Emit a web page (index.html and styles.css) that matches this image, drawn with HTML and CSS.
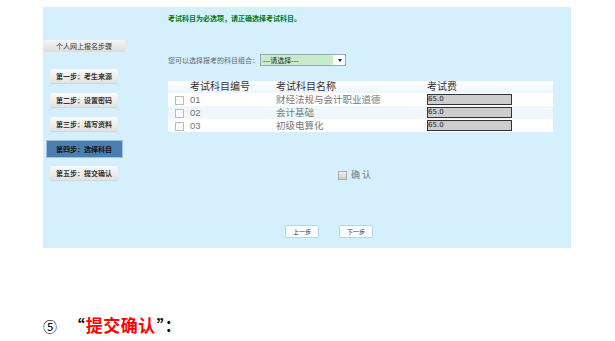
FILE: index.html
```html
<!DOCTYPE html>
<html lang="zh-CN">
<head>
    <meta charset="UTF-8">
    <meta name="viewport" content="width=device-width, initial-scale=1.0">
    <title>选择科目</title>
    <link rel="stylesheet" href="styles.css">
</head>
<body>
    <div class="panel">
        <!-- 左侧步骤 -->
        <div class="sidebar">
            <div class="side-title">个人网上报名步骤</div>
            <div class="step">第一步：考生来源</div>
            <div class="step">第二步：设置密码</div>
            <div class="step">第三步：填写资料</div>
            <div class="step active">第四步：选择科目</div>
            <div class="step">第五步：提交确认</div>
        </div>

        <!-- 右侧内容 -->
        <div class="main">
            <div class="notice">考试科目为必选项，请正确选择考试科目。</div>
            <div class="combo">
                <span>您可以选择报考的科目组合：</span>
                <div class="select"><span>---请选择---</span><span class="arrow"></span></div>
            </div>
            <table class="subjects">
                <thead>
                    <tr>
                        <th class="c-check"></th>
                        <th class="c-code">考试科目编号</th>
                        <th class="c-name">考试科目名称</th>
                        <th class="c-fee">考试费</th>
                    </tr>
                </thead>
                <tbody>
                    <tr>
                        <td class="c-check"><span class="box"></span></td>
                        <td class="c-code">01</td>
                        <td class="c-name">财经法规与会计职业道德</td>
                        <td class="c-fee"><div class="fee">65.0</div></td>
                    </tr>
                    <tr class="alt">
                        <td class="c-check"><span class="box"></span></td>
                        <td class="c-code">02</td>
                        <td class="c-name">会计基础</td>
                        <td class="c-fee"><div class="fee">65.0</div></td>
                    </tr>
                    <tr>
                        <td class="c-check"><span class="box"></span></td>
                        <td class="c-code">03</td>
                        <td class="c-name">初级电算化</td>
                        <td class="c-fee"><div class="fee">65.0</div></td>
                    </tr>
                </tbody>
            </table>
            <div class="confirm"><span class="box"></span><span>确 认</span></div>
            <div class="buttons">
                <div class="btn">上一步</div>
                <div class="btn">下一步</div>
            </div>
        </div>
    </div>

    <p class="caption"><span class="num">⑤</span> “<span class="red">提交确认</span>”：</p>
</body>
</html>
```

FILE: styles.css
```css
body {
    margin: 0;
    background: #fff;
    font-family: "Noto Sans CJK SC", "DejaVu Sans", sans-serif;
}
.panel {
    margin: 7px 0 0 43px;
    width: 528px;
    height: 241px;
    background: #d6effc;
    display: flex;
}
.sidebar {
    width: 82px;
    padding-top: 33px;
    display: flex;
    flex-direction: column;
    align-items: center;
}
.side-title {
    width: 82px;
    height: 12px;
    line-height: 12px;
    text-align: center;
    font-size: 7px;
    color: #333;
    background: linear-gradient(#f6f6f6, #dcdcdc);
    margin-bottom: 17px;
}
.step {
    width: 68px;
    height: 14px;
    line-height: 14px;
    margin-bottom: 10px;
    text-align: center;
    font-size: 7px;
    font-weight: bold;
    color: #333;
    background: linear-gradient(#fafafa, #e2e2e2);
    box-shadow: 0 1px 1px #c5d9e4;
    border-radius: 2px;
}
.step.active {
    width: 75px;
    height: 16px;
    line-height: 16px;
    margin-bottom: 9px;
    color: #111;
    background: #4a7fb0;
    border-radius: 0;
    box-shadow: 0 0 0 1px #9ec2dc;
}
.main {
    margin-left: 43px;
    width: 385px;
    display: flex;
    flex-direction: column;
}
.notice {
    margin-top: 7px;
    font-size: 7px;
    font-weight: bold;
    color: #007a10;
    line-height: 9px;
}
.combo {
    margin-top: 31px;
    display: flex;
    align-items: center;
    font-size: 7px;
    color: #666;
}
.select {
    margin-left: 1px;
    width: 84px;
    height: 10px;
    border: 1px solid #9aa;
    background: #fff;
    display: flex;
    align-items: center;
    color: #222;
}
.select span:first-child {
    width: 70px;
    height: 100%;
    line-height: 10px;
    background: #c8eccb;
    padding-left: 2px;
}
.arrow {
    margin-left: 5px;
    border-left: 2.5px solid transparent;
    border-right: 2.5px solid transparent;
    border-top: 3px solid #222;
}
.subjects {
    margin-top: 15px;
    width: 385px;
    border-collapse: collapse;
    table-layout: fixed;
    font-family: "Liberation Sans", "Noto Sans CJK SC", sans-serif;
    font-size: 9.5px;
}
.subjects th {
    height: 12px;
    padding: 0;
    font-weight: normal;
    color: #333;
    text-align: left;
    font-size: 10px;
    line-height: 12px;
    background: linear-gradient(#ffffff, #eef5fb);
}
.subjects td {
    height: 13px;
    padding: 0;
    color: #777;
    line-height: 13px;
    background: #fff;
}
.subjects tr.alt td {
    background: #eef7fd;
}
.c-check {
    width: 22px;
    text-align: center;
}
.c-code {
    width: 86px;
}
.c-name {
    width: 151px;
}
.c-fee {
    width: 126px;
}
.box {
    display: inline-block;
    width: 7px;
    height: 7px;
    border: 1px solid #bbb;
    background: #fafafa;
    vertical-align: middle;
}
.fee {
    width: 83px;
    height: 9px;
    border: 1px solid #333;
    background: #cdcdcd;
    font-size: 7px;
    line-height: 9px;
    color: #222;
    font-family: "DejaVu Sans", sans-serif;
}
.confirm {
    margin-top: 37px;
    margin-left: 170px;
    display: flex;
    align-items: center;
    gap: 4px;
    font-size: 9px;
    line-height: 12px;
    color: #777;
}
.confirm .box {
    border-color: #aaa;
    background: linear-gradient(#eee, #ccc);
}
.buttons {
    margin-top: 44px;
    margin-left: 117px;
    display: flex;
    gap: 20px;
}
.btn {
    width: 32px;
    height: 11px;
    line-height: 11px;
    text-align: center;
    font-size: 6px;
    color: #333;
    background: #fdfdfd;
    border: 1px solid #b7d6ea;
    border-radius: 2px;
}
.caption {
    margin: 67px 0 0 43px;
    font-size: 16px;
    font-weight: bold;
    color: #000;
    line-height: 20px;
}
.num {
    font-weight: normal;
    font-size: 14px;
    margin-right: 8px;
}
.red {
    color: #f00;
    font-size: 17px;
    letter-spacing: 0.5px;
    margin: 0 1px;
}
```
